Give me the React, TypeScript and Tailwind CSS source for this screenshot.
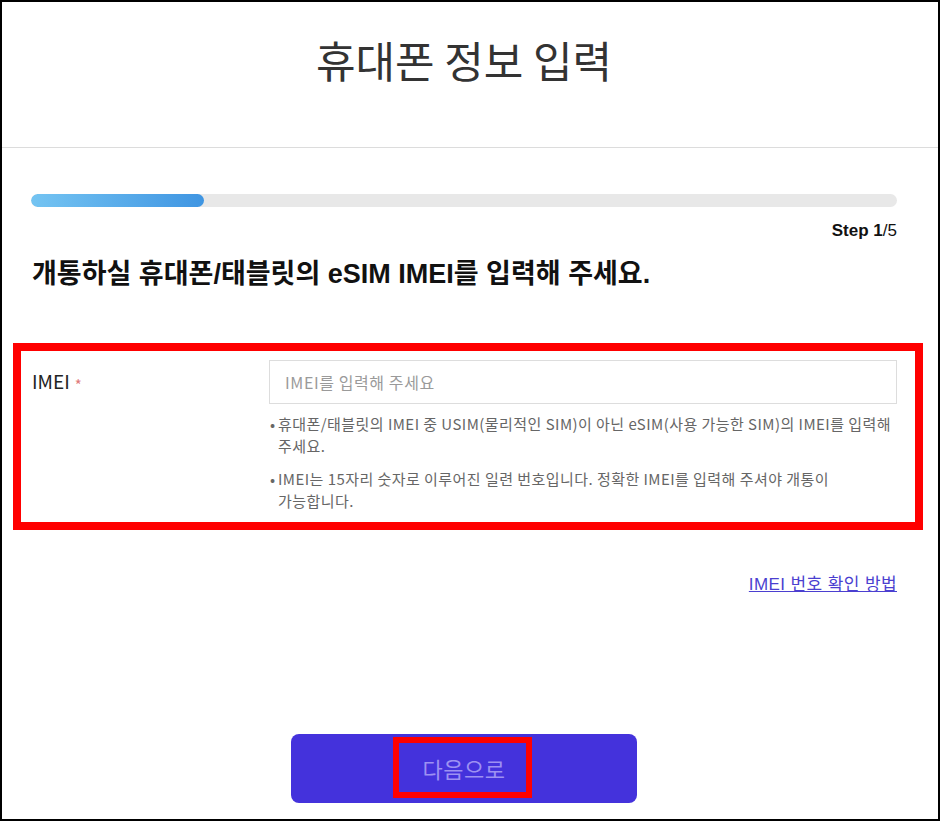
import React from "react";

const kr = "font-['Noto_Sans_CJK_KR',sans-serif]";
const ar = "font-['Liberation_Sans','Noto_Sans_CJK_KR',sans-serif]";

export default function App() {
  return (
    <div className="w-[940px] h-[821px] bg-white border-2 border-black box-border flex flex-col overflow-hidden">
      <header className="h-[146px] shrink-0 border-b border-[#dcdcdc] flex justify-center pt-[27px] pr-[12px]">
        <h1 className={`${kr} text-[43px] leading-[60px] text-[#333] font-normal`}>휴대폰 정보 입력</h1>
      </header>

      <main className="flex flex-col pl-[29px] pr-[41px]">
        <div className="mt-[46px] h-[13px] w-full rounded-full bg-[#e8e8e8] overflow-hidden">
          <div className="h-full w-[173px] rounded-full bg-gradient-to-r from-[#74c4f2] to-[#3f95e2]" />
        </div>

        <div className={`${ar} mt-[14px] self-end text-[17px] leading-[20px] text-[#111]`}>
          <span className="font-bold">Step 1</span>/5
        </div>

        <h2 className={`${ar} mt-[17px] ml-[1px] text-[27px] leading-[32px] font-bold text-[#111]`}>
          개통하실 휴대폰/태블릿의 eSIM IMEI를 입력해 주세요.
        </h2>

        <section className="mt-[53px] ml-[-18px] w-[910px] h-[187px] border-[8px] border-[#ff0000] pl-[11px] pr-[18px] pt-[9px] flex">
          <div className={`${kr} w-[237px] shrink-0 pt-[8px] text-[19px] leading-[26px] text-[#222]`}>
            IMEI<span className="ml-[5px] text-[15px] text-[#e07a7a] align-[-2px]">*</span>
          </div>
          <div className="flex-1 flex flex-col">
            <div className="h-[44px] border border-[#dddddd] flex items-center pl-[15px]">
              <span className={`${kr} text-[16px] tracking-[0.6px] text-[#9a9a9a]`}>IMEI를 입력해 주세요</span>
            </div>
            <ul className={`${kr} mt-[9px] text-[15px] tracking-[0.45px] leading-[22px] text-[#666] flex flex-col gap-[11px] break-keep`}>
              <li className="flex">
                <span className="w-[9px] shrink-0 pl-[1px] tracking-normal">•</span>
                <span>휴대폰/태블릿의 IMEI 중 USIM(물리적인 SIM)이 아닌 eSIM(사용 가능한 SIM)의 IMEI를 입력해 주세요.</span>
              </li>
              <li className="flex">
                <span className="w-[9px] shrink-0 pl-[1px] tracking-normal">•</span>
                <span>IMEI는 15자리 숫자로 이루어진 일련 번호입니다. 정확한 IMEI를 입력해 주셔야 개통이 가능합니다.</span>
              </li>
            </ul>
          </div>
        </section>

        <a href="#" className={`${ar} mt-[44px] self-end text-[17px] tracking-[0.4px] leading-[22px] text-[#4b3fd0] underline`}>
          IMEI 번호 확인 방법
        </a>

        <div className="mt-[138px] flex justify-center">
          <button className="relative w-[346px] h-[69px] rounded-[8px] bg-[#4432dc] flex items-center justify-center">
            <span className={`${kr} text-[22px] tracking-[0.5px] text-[#9d91f2]`}>다음으로</span>
            <span className="absolute left-[102px] top-[3px] w-[139px] h-[61px] border-[6px] border-[#ff0000]" />
          </button>
        </div>
      </main>
    </div>
  );
}
